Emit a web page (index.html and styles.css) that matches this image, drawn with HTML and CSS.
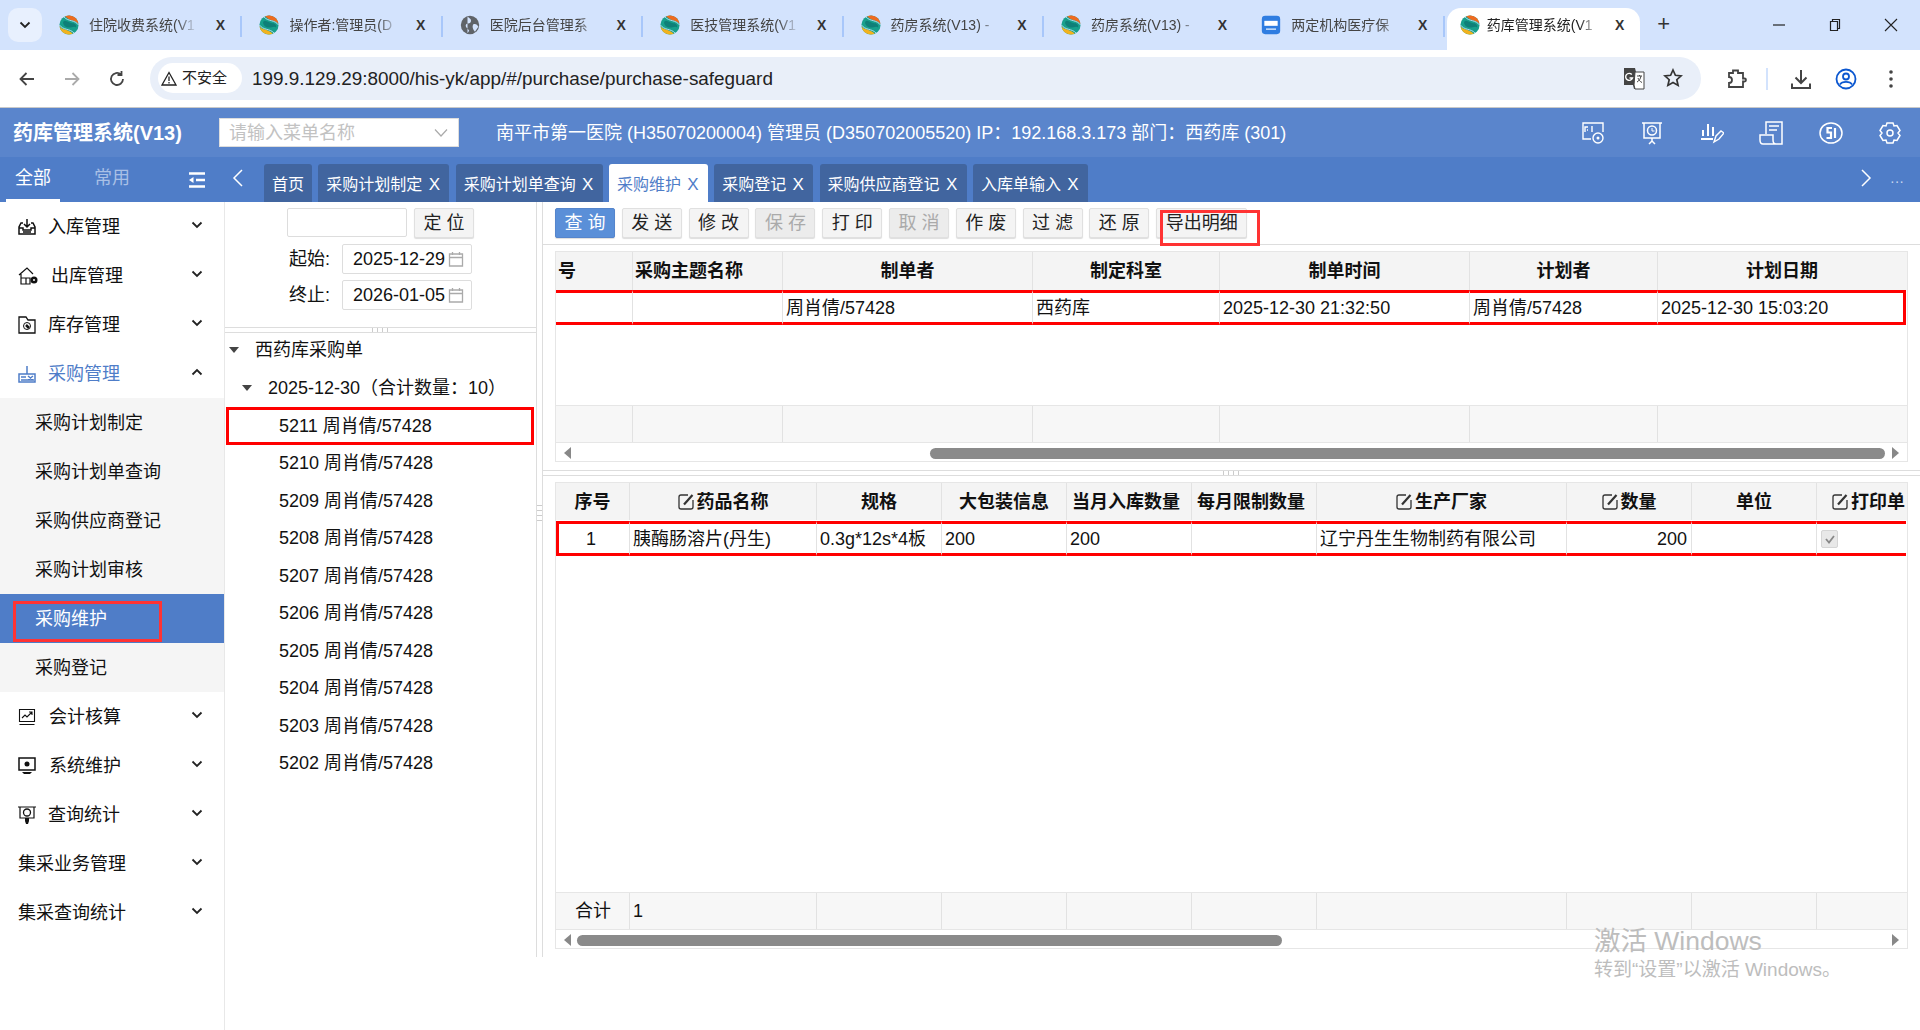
FILE: index.html
```html
<!DOCTYPE html>
<html lang="zh-CN">
<head>
<meta charset="utf-8">
<title>药库管理系统(V13)</title>
<link rel="stylesheet" href="styles.css">
</head>
<body>
<svg class="defs" width="0" height="0">
  <defs>
    <symbol id="logo" viewBox="0 0 24 24">
      <circle cx="12" cy="12" r="11.5" fill="#17a08c"/>
      <path d="M5 8c3-3 7 2 11 2s5 3 4.500 5C18 12 13 17 8 14c-2-1.500-3.500-3.500-3-6Z" fill="#0f7f78"/>
      <path d="M7.500 1.400A11.500 11.500 0 0 1 23.400 10.500C19.500 5 12.500 7.500 7.500 1.400Z" fill="#ee6a1f"/>
      <path d="M16.500 22.600A11.500 11.500 0 0 1 .6 13.500C4.500 19 11.500 16.500 16.500 22.600Z" fill="#f2b21d"/>
      <path d="M6 2.400C11 8 19 5.500 23.400 12M18 21.600C13 16 5 18.500.6 12" fill="none" stroke="#d3e3fd" stroke-width="1"/>
    </symbol>
    <symbol id="edit" viewBox="0 0 16 16">
      <path d="M10 1H3A2 2 0 0 0 1 3v10a2 2 0 0 0 2 2h10a2 2 0 0 0 2-2V6" fill="none" stroke="#333" stroke-width="1.300"/>
      <path d="M6 10.500 14.500 1" stroke="#333" stroke-width="2.200" fill="none"/>
    </symbol>
    <symbol id="chev" viewBox="0 0 12 8">
      <path d="M1.500 1.500 6 6l4.500-4.500" fill="none" stroke="#222" stroke-width="1.800"/>
    </symbol>
    <symbol id="cal" viewBox="0 0 16 16">
      <path d="M1.500 3h13v12h-13zM1.500 6.500h13M4.500 1v3M11.500 1v3" fill="none" stroke="#aaa" stroke-width="1.300"/>
    </symbol>
  </defs>
</svg>

<div class="tabstrip">
  <div class="tabs-menu"><svg width="12" height="8"><use href="#chev"/></svg></div>
  <div class="ctab"><svg class="fav"><use href="#logo"/></svg><span class="ctitle">住院收费系统(V1</span><span class="cx">X</span></div>
  <div class="ctab"><svg class="fav"><use href="#logo"/></svg><span class="ctitle">操作者:管理员(D</span><span class="cx">X</span></div>
  <div class="ctab"><svg class="fav" viewBox="0 0 24 24"><circle cx="12" cy="12" r="11" fill="#5f6368"/><path d="M9 2c3 2 5 3 4 6s-5 1-6 4 3 4 4 7l-2 3M16 11c3-1 5 1 6 3l-4 6c-2-2-4-6-2-9Z" fill="#d3e3fd"/></svg><span class="ctitle">医院后台管理系</span><span class="cx">X</span></div>
  <div class="ctab"><svg class="fav"><use href="#logo"/></svg><span class="ctitle">医技管理系统(V1</span><span class="cx">X</span></div>
  <div class="ctab"><svg class="fav"><use href="#logo"/></svg><span class="ctitle">药房系统(V13) -</span><span class="cx">X</span></div>
  <div class="ctab"><svg class="fav"><use href="#logo"/></svg><span class="ctitle">药房系统(V13) -</span><span class="cx">X</span></div>
  <div class="ctab"><svg class="fav" viewBox="0 0 24 24"><rect x="1" y="1" width="22" height="22" rx="4" fill="#2f7de1"/><rect x="4" y="7" width="16" height="6" fill="#fff"/><rect x="6" y="16" width="12" height="2" fill="#bcd6f7"/></svg><span class="ctitle">两定机构医疗保</span><span class="cx">X</span></div>
  <div class="ctab ctab-active"><svg class="fav"><use href="#logo"/></svg><span class="ctitle">药库管理系统(V1</span><span class="cx">X</span></div>
  <div class="newtab">+</div>
  <div class="winctl">
    <svg width="14" height="14" viewBox="0 0 14 14"><path d="M1 7h12" stroke="#222" stroke-width="1.200"/></svg>
    <svg width="14" height="14" viewBox="0 0 14 14"><path d="M2.500 3.500h7v9h-7zM4.500 3.500v-2h7v9h-2" fill="none" stroke="#222" stroke-width="1.200"/></svg>
    <svg width="14" height="14" viewBox="0 0 14 14"><path d="M1 1l12 12M13 1 1 13" stroke="#222" stroke-width="1.100"/></svg>
  </div>
</div>

<div class="toolbar">
  <div class="navbtns">
    <svg width="18" height="18" viewBox="0 0 18 18"><path d="M16 9H3M8.500 3 2.500 9l6 6" fill="none" stroke="#444" stroke-width="1.800"/></svg>
    <svg width="18" height="18" viewBox="0 0 18 18"><path d="M2 9h13M9.500 3l6 6-6 6" fill="none" stroke="#aaa" stroke-width="1.800"/></svg>
    <svg width="18" height="18" viewBox="0 0 18 18"><path d="M15 9a6 6 0 1 1-2-4.500M13.500 1v4h-4" fill="none" stroke="#444" stroke-width="1.800"/></svg>
  </div>
  <div class="omnibox">
    <div class="chip">
      <svg width="16" height="15" viewBox="0 0 16 15"><path d="M8 1.500 15 14H1ZM8 5.500v4.500M8 11v1.500" fill="none" stroke="#222" stroke-width="1.300"/></svg>
      <span>不安全</span>
    </div>
    <span class="url">199.9.129.29:8000/his-yk/app/#/purchase/purchase-safeguard</span>
    <div class="omni-icons">
      <svg width="24" height="24" viewBox="0 0 24 24"><path d="M2 2h11l1 4h8v17H12l-1-4H2Z" fill="#444"/><path d="M13 6h9v17h-9l-1-4Z" fill="#fff" stroke="#444"/><path d="M15 10h5M17.500 9v1M19 10c-.5 3-2 5-4 6M16 12c.7 2 2 3.500 4 4.500" fill="none" stroke="#444"/><path d="M9.800 8.500A3.500 3.500 0 1 0 10.500 12H7.500" fill="none" stroke="#fff" stroke-width="1.400"/></svg>
      <svg width="20" height="20" viewBox="0 0 20 20"><path d="m10 2 2.400 5.300 5.700.6-4.300 3.800 1.300 5.700L10 14.500l-5.100 2.900 1.300-5.700L1.900 7.900l5.700-.6Z" fill="none" stroke="#333" stroke-width="1.700"/></svg>
    </div>
  </div>
  <div class="tool-icons">
    <svg width="22" height="22" viewBox="0 0 22 22"><path d="M4 5h4V2.500h5V5h5v5.500h1.500a1.500 1.500 0 0 1 0 3H18V19H4v-4a2.500 2.500 0 0 0 0-6Z" fill="none" stroke="#444" stroke-width="1.800"/></svg>
    <span class="tool-sep"></span>
    <svg width="22" height="22" viewBox="0 0 22 22"><path d="M11 2v13M5.500 9.500 11 15l5.500-5.500M2 15.500V20h18v-4.500" fill="none" stroke="#444" stroke-width="2"/></svg>
    <svg width="22" height="22" viewBox="0 0 22 22"><circle cx="11" cy="11" r="9.500" fill="none" stroke="#0b57d0" stroke-width="1.800"/><circle cx="11" cy="8.500" r="3" fill="none" stroke="#0b57d0" stroke-width="1.800"/><path d="M5 16.500c2-3.500 10-3.500 12 0" fill="none" stroke="#0b57d0" stroke-width="1.800"/></svg>
    <svg width="22" height="22" viewBox="0 0 22 22"><circle cx="11" cy="4" r="1.800" fill="#444"/><circle cx="11" cy="11" r="1.800" fill="#444"/><circle cx="11" cy="18" r="1.800" fill="#444"/></svg>
  </div>
</div>

<header class="app-head">
  <div class="app-title">药库管理系统(V13)</div>
  <div class="menu-search"><span>请输入菜单名称</span><svg width="16" height="10" viewBox="0 0 16 10"><path d="M2 1.500 8 8l6-6.500" fill="none" stroke="#aaa" stroke-width="1.200"/></svg></div>
  <div class="app-info">南平市第一医院 (H35070200004) 管理员 (D350702005520) IP：192.168.3.173 部门：西药库 (301)</div>
  <div class="head-icons">
    <svg viewBox="0 0 24 24"><path d="M10 18H2V2h20v9M4 11V6h3M6 9h1M11 5v6" fill="none" stroke="#fff" stroke-width="1.400"/><circle cx="17" cy="17" r="5" fill="none" stroke="#fff" stroke-width="1.400"/><circle cx="17" cy="17" r="1.500" fill="#fff"/></svg>
    <svg viewBox="0 0 24 24"><path d="M2 2h20M4 2v15h16V2M12 17v3M9 23l3-3 3 3" fill="none" stroke="#fff" stroke-width="1.500"/><circle cx="12" cy="9.500" r="4.500" fill="none" stroke="#fff" stroke-width="1.500"/><path d="M12 7v3h2.500" fill="none" stroke="#fff"/></svg>
    <svg viewBox="0 0 24 24"><path d="M3 9v6M8 3v12M13 6v9M1 18h12" fill="none" stroke="#fff" stroke-width="2"/><path d="m14 21 2-6 5-5 3 2-5 6Z" fill="none" stroke="#fff" stroke-width="1.400"/></svg>
    <svg viewBox="0 0 24 24"><path d="M7 13V1h16v22H11M10 5h10M10 9h8M1 14h13v5c0 2 1 4 3 4H4c-2 0-3-2-3-4Z" fill="none" stroke="#fff" stroke-width="1.500"/></svg>
    <svg viewBox="0 0 24 24"><ellipse cx="12" cy="12" rx="11" ry="10" fill="none" stroke="#fff" stroke-width="1.500"/><path d="M13 7H8.500v4.500h3.500V17H7.500M16 7v10" fill="none" stroke="#fff" stroke-width="2.200"/></svg>
    <svg viewBox="0 0 24 24"><path d="m9 2h6l1 3 3-.5 3 5-2 2.500 2 2.500-3 5-3-.5-1 3H9l-1-3-3 .5-3-5 2-2.500-2-2.500 3-5 3 .5Z" fill="none" stroke="#fff" stroke-width="1.500"/><circle cx="12" cy="12" r="3" fill="none" stroke="#fff" stroke-width="1.500"/></svg>
  </div>
</header>

<nav class="nav-row">
  <div class="nav-left">
    <span class="scope scope-on">全部</span>
    <span class="scope scope-off">常用</span>
    <svg class="menu-fold" width="16" height="16" viewBox="0 0 16 16"><path d="M0 1.500h16M7 8h9M0 14.500h16" stroke="#fff" stroke-width="2.400"/><path d="M4.500 5v6L0 8Z" fill="#fff"/></svg>
  </div>
  <div class="nav-prev"><svg width="11" height="18" viewBox="0 0 11 18"><path d="M10 1 2 9l8 8" fill="none" stroke="#fff" stroke-width="1.500"/></svg></div>
  <div class="page-tabs">
    <div class="ptab">首页</div>
    <div class="ptab">采购计划制定<span class="px">X</span></div>
    <div class="ptab">采购计划单查询<span class="px">X</span></div>
    <div class="ptab ptab-on">采购维护<span class="px">X</span></div>
    <div class="ptab">采购登记<span class="px">X</span></div>
    <div class="ptab">采购供应商登记<span class="px">X</span></div>
    <div class="ptab">入库单输入<span class="px">X</span></div>
  </div>
  <div class="nav-next"><svg width="11" height="18" viewBox="0 0 11 18"><path d="m1 1 8 8-8 8" fill="none" stroke="#fff" stroke-width="1.500"/></svg><span>···</span></div>
</nav>

<div class="body">
  <aside class="sidebar">
    <div class="mi"><svg class="mi-ic" viewBox="0 0 18 18"><path d="M5 5H3L1 9v7h16V9l-2-4h-2M9 1v8M6 6l3 3 3-3M1 10h4v2h8v-2h4M5 14h8" fill="none" stroke="#111" stroke-width="1.500"/></svg><span>入库管理</span><svg class="mi-ch"><use href="#chev"/></svg></div>
    <div class="mi"><svg class="mi-ic mi-ic-w" viewBox="0 0 20 18"><path d="M1 8 9 1l6 6M3 7v10h9V11H3M8 11v6" fill="none" stroke="#111" stroke-width="1.200"/><circle cx="16" cy="13" r="3.500" fill="#111"/><circle cx="16" cy="13" r="1" fill="#fff"/></svg><span>出库管理</span><svg class="mi-ch"><use href="#chev"/></svg></div>
    <div class="mi"><svg class="mi-ic" viewBox="0 0 18 18"><path d="M1 1h7l2 3h7v13H1Z" fill="none" stroke="#111" stroke-width="1.300"/><circle cx="9" cy="10" r="3.500" fill="none" stroke="#111"/><path d="m8 9 3 3" stroke="#111" stroke-width="2.500"/></svg><span>库存管理</span><svg class="mi-ch"><use href="#chev"/></svg></div>
    <div class="mi mi-open"><svg class="mi-ic" viewBox="0 0 18 18"><path d="M9 1v8M1 9h16v8H1ZM3 12h5M3 15h13M10 11l5 4M15 11l-5 4" fill="none" stroke="#4f7dc8" stroke-width="1.500"/></svg><span>采购管理</span><svg class="mi-ch mi-ch-up"><use href="#chev"/></svg></div>
    <div class="submenu">
      <div class="si">采购计划制定</div>
      <div class="si">采购计划单查询</div>
      <div class="si">采购供应商登记</div>
      <div class="si">采购计划审核</div>
      <div class="si si-on">采购维护</div>
      <div class="si">采购登记</div>
    </div>
    <div class="mi"><svg class="mi-ic" viewBox="0 0 18 18"><path d="M1.500 1.500h15v12h-15ZM1.500 16.500h15M4 10l3-3 2 2 5-5M11 4h3v3" fill="none" stroke="#111" stroke-width="1.100"/></svg><span class="mi-t1">会计核算</span><svg class="mi-ch"><use href="#chev"/></svg></div>
    <div class="mi"><svg class="mi-ic" viewBox="0 0 18 18"><path d="M1 1h16v12H1Z" fill="none" stroke="#111" stroke-width="1.500"/><path d="M4 15h10l-2 2H6Z" fill="#111"/><circle cx="9" cy="7" r="2.500" fill="#111"/></svg><span class="mi-t1">系统维护</span><svg class="mi-ch"><use href="#chev"/></svg></div>
    <div class="mi"><svg class="mi-ic" viewBox="0 0 18 18"><path d="M0 1h18M2 1v11h14V1" fill="none" stroke="#111" stroke-width="1.200"/><circle cx="9" cy="6.500" r="3.500" fill="none" stroke="#111" stroke-width="1.300"/><path d="M7 12h4v3l-1 3H8l-1-3Z" fill="#111"/></svg><span>查询统计</span><svg class="mi-ch"><use href="#chev"/></svg></div>
    <div class="mi"><span>集采业务管理</span><svg class="mi-ch"><use href="#chev"/></svg></div>
    <div class="mi"><span>集采查询统计</span><svg class="mi-ch"><use href="#chev"/></svg></div>
  </aside>

  <div class="workspace">
    <section class="tree-pane">
      <div class="filter">
        <div class="f-row f-locate"><span class="inp"></span><span class="btn btn-loc">定 位</span></div>
        <div class="f-row"><label>起始:</label><span class="date">2025-12-29<svg><use href="#cal"/></svg></span></div>
        <div class="f-row"><label>终止:</label><span class="date">2026-01-05<svg><use href="#cal"/></svg></span></div>
      </div>
      <div class="split-h"><span class="grip"></span></div>
      <div class="tree">
        <div class="tr tr-0"><i class="caret"></i>西药库采购单</div>
        <div class="tr tr-1"><i class="caret"></i>2025-12-30（合计数量：10）</div>
        <div class="tr tr-2 tr-mark">5211 周肖倩/57428</div>
        <div class="tr tr-2">5210 周肖倩/57428</div>
        <div class="tr tr-2">5209 周肖倩/57428</div>
        <div class="tr tr-2">5208 周肖倩/57428</div>
        <div class="tr tr-2">5207 周肖倩/57428</div>
        <div class="tr tr-2">5206 周肖倩/57428</div>
        <div class="tr tr-2">5205 周肖倩/57428</div>
        <div class="tr tr-2">5204 周肖倩/57428</div>
        <div class="tr tr-2">5203 周肖倩/57428</div>
        <div class="tr tr-2">5202 周肖倩/57428</div>
      </div>
    </section>

    <div class="split-v"><span class="grip-v"></span></div>

    <section class="main-pane">
      <div class="actions">
        <span class="btn btn-pri">查 询</span>
        <span class="btn">发 送</span>
        <span class="btn">修 改</span>
        <span class="btn btn-dis">保 存</span>
        <span class="btn">打 印</span>
        <span class="btn btn-dis">取 消</span>
        <span class="btn">作 废</span>
        <span class="btn">过 滤</span>
        <span class="btn">还 原</span>
        <span class="btn btn-exp">导出明细</span>
        <span class="mark-exp"></span>
      </div>

      <div class="grid grid-top">
        <div class="g-row g-head cols-top">
          <div class="c c-l">号</div><div class="c c-l">采购主题名称</div><div class="c">制单者</div><div class="c">制定科室</div><div class="c">制单时间</div><div class="c">计划者</div><div class="c">计划日期</div>
        </div>
        <div class="g-row g-data g-data-top cols-top">
          <div class="c"></div><div class="c"></div><div class="c c-t">周肖倩/57428</div><div class="c c-t">西药库</div><div class="c c-t">2025-12-30 21:32:50</div><div class="c c-t">周肖倩/57428</div><div class="c c-t">2025-12-30 15:03:20</div>
        </div>
        <div class="g-space"></div>
        <div class="g-row g-foot cols-top">
          <div class="c"></div><div class="c"></div><div class="c"></div><div class="c"></div><div class="c"></div><div class="c"></div><div class="c"></div>
        </div>
        <div class="hscroll">
          <i class="arr arr-l"></i><span class="thumb thumb-top"></span><i class="arr arr-r"></i>
        </div>
      </div>

      <div class="split-h split-main"><span class="grip"></span></div>

      <div class="grid grid-bot">
        <div class="g-row g-head g-head-bot cols-bot">
          <div class="c">序号</div>
          <div class="c"><svg class="ed"><use href="#edit"/></svg>药品名称</div>
          <div class="c">规格</div><div class="c">大包装信息</div><div class="c c-off">当月入库数量</div><div class="c c-off">每月限制数量</div>
          <div class="c"><svg class="ed"><use href="#edit"/></svg>生产厂家</div>
          <div class="c"><svg class="ed"><use href="#edit"/></svg>数量</div>
          <div class="c">单位</div>
          <div class="c c-clip"><svg class="ed"><use href="#edit"/></svg>打印单</div>
        </div>
        <div class="g-row g-data g-data-bot cols-bot">
          <div class="c c-off">1</div><div class="c c-t">胰酶肠溶片(丹生)</div><div class="c c-t">0.3g*12s*4板</div><div class="c c-t">200</div><div class="c c-t">200</div><div class="c"></div><div class="c c-t">辽宁丹生生物制药有限公司</div><div class="c c-r">200</div><div class="c"></div>
          <div class="c c-t"><span class="chk"><svg width="12" height="12" viewBox="0 0 12 12"><path d="m2 6 3 3.500L10 3" fill="none" stroke="#888" stroke-width="1.800"/></svg></span></div>
        </div>
        <div class="g-space"></div>
        <div class="g-row g-foot cols-bot">
          <div class="c c-sum">合计</div><div class="c c-t">1</div><div class="c"></div><div class="c"></div><div class="c"></div><div class="c"></div><div class="c"></div><div class="c"></div><div class="c"></div><div class="c"></div>
        </div>
        <div class="hscroll">
          <i class="arr arr-l"></i><span class="thumb thumb-bot"></span><i class="arr arr-r"></i>
        </div>
      </div>
    </section>
  </div>

  <div class="watermark">
    <div class="wm-1">激活 Windows</div>
    <div class="wm-2">转到“设置”以激活 Windows。</div>
  </div>
</div>
</body>
</html>
```

FILE: styles.css
```css
* { box-sizing: border-box; }
html, body { margin: 0; padding: 0; }
body {
  width: 1920px; height: 1030px; overflow: hidden; background: #fff; color: #111;
  font-family: "Liberation Sans", "Noto Sans CJK SC", sans-serif; font-size: 18px; line-height: 24px;
}
.defs { position: absolute; }

/* browser tab strip */
.tabstrip { height: 50px; background: #d3e3fd; display: flex; align-items: flex-end; padding-left: 8px; }
.tabs-menu { width: 34px; height: 34px; margin-bottom: 8px; border-radius: 10px; background: #e8f0fe; display: flex; align-items: center; justify-content: center; }
.ctab { width: 200.4px; height: 42px; padding: 0 14px 8px 12px; display: flex; align-items: center; gap: 10px; font-size: 14px; color: #444; position: relative; flex: none; }
.ctab:first-of-type { margin-left: 4px; }
.ctab::after { content: ""; position: absolute; right: 0; top: 8px; height: 21px; width: 2px; background: #a8c7fa; }
.ctab:nth-of-type(7)::after, .ctab-active::after { display: none; }
.ctab-active { width: 193px; margin-left: 2px; background: #fff; border-radius: 14px 14px 0 0; color: #222; padding: 0 12px 8px 10px; gap: 7px; }
.fav { width: 20px; height: 20px; flex: none; margin-left: 5px; }
.ctab-active .fav { margin-left: 3px; }
.ctitle { flex: 1; min-width: 0; overflow: hidden; white-space: nowrap; -webkit-mask-image: linear-gradient(90deg, #000 78%, transparent 96%); mask-image: linear-gradient(90deg, #000 78%, transparent 96%); }
.cx { width: 16px; text-align: center; font-size: 14px; font-weight: 700; color: #333; }
.newtab { width: 48px; padding-bottom: 10px; font-size: 22px; color: #333; height: 42px; display: flex; align-items: center; justify-content: center; }
.winctl { margin-left: auto; display: flex; gap: 42px; padding: 0 22px 18px 0; }

/* browser toolbar */
.toolbar { height: 58px; background: #fff; display: flex; align-items: center; padding-left: 18px; border-bottom: 1px solid #c9c9c9; }
.navbtns { width: 132px; display: flex; gap: 27px; }
.omnibox { width: 1551px; height: 43px; margin-top: -1px; background: #e9eff9; border-radius: 22px; display: flex; align-items: center; padding-left: 8px; }
.chip { width: 84px; height: 30px; background: #fff; border-radius: 15px; display: flex; align-items: center; gap: 5px; padding-left: 3px; font-size: 15px; color: #222; white-space: nowrap; }
.url { margin-left: 10px; font-size: 18.900px; color: #222; white-space: nowrap; padding-top: 1px; }
.omni-icons { margin-left: auto; display: flex; align-items: center; gap: 17px; padding-right: 18px; }
.tool-icons { display: flex; align-items: center; gap: 23px; margin-left: 24px; }
.tool-sep { width: 2px; height: 22px; background: #d3e3fd; margin: 0 -1px 0 -4px; }

/* application header */
.app-head { height: 49px; background: #5a85cc; display: flex; align-items: center; padding-left: 13px; color: #fff; }
.app-title { width: 206px; font-size: 20px; font-weight: 700; white-space: nowrap; }
.menu-search { width: 240px; height: 29px; background: #fff; border: 1px solid #ddd; display: flex; align-items: center; justify-content: space-between; padding: 0 9px; color: #c2c2c2; }
.app-info { margin-left: 37px; white-space: nowrap; font-size: 18px; }
.head-icons { margin-left: auto; display: flex; gap: 35.400px; padding-right: 18px; }
.head-icons svg { width: 24px; height: 24px; }

/* page tab row */
.nav-row { height: 45px; background: #4f7dc8; display: flex; color: #fff; }
.nav-left { width: 224px; flex: none; display: flex; align-items: flex-start; }
.scope { width: 54px; height: 45px; padding-top: 9px; text-align: center; flex: none; }
.scope-on { margin-left: 6px; border-bottom: 3px solid #fff; }
.scope-off { margin-left: 25px; color: #a9c0e6; }
.menu-fold { margin: 15px 19px 0 auto; }
.nav-prev { width: 40px; padding: 12px 0 0 8px; flex: none; }
.page-tabs { display: flex; gap: 6.300px; align-items: flex-end; }
.ptab { height: 38px; padding: 9px 8px 0; font-size: 16px; background: #41659f; border-radius: 3px 3px 0 0; white-space: nowrap; display: flex; align-items: flex-start; }
.ptab-on { background: #fff; color: #4f7dc8; }
.px { width: 14px; margin-left: 5px; font-size: 17px; text-align: center; }
.nav-next { margin-left: auto; display: flex; gap: 18px; padding: 12px 16px 0 0; align-items: flex-start; font-size: 14px; color: #c8d7ef; }

/* body layout */
.body { height: 828px; display: flex; align-items: flex-start; position: relative; }
.sidebar { width: 225px; height: 828px; flex: none; border-right: 1px solid #e8e8e8; }
.mi { height: 49px; display: flex; align-items: center; padding: 0 21px 0 18px; font-size: 18px; color: #111; }
.mi-ic { width: 18px; height: 18px; margin-right: 12px; flex: none; }
.mi-ic-w { width: 20px; margin-right: 13px; }
.mi-t1 { margin-left: 1px; }
.mi-ch { width: 12px; height: 8px; margin-left: auto; margin-top: -4px; }
.mi-ch-up { transform: rotate(180deg); }
.mi-open { color: #4f7dc8; }
.submenu { background: #f5f5f5; }
.si { height: 49px; display: flex; align-items: center; padding-left: 35px; position: relative; }
.si-on { background: #4f7dc8; color: #fff; }
.si-on::after { content: ""; position: absolute; left: 13px; top: 7px; width: 143px; height: 35px; border: 3px solid #f33; }

.workspace { flex: 1; height: 755px; display: flex; }

/* tree column */
.tree-pane { width: 312px; flex: none; border-right: 1px solid #ddd; }
.filter { height: 125px; padding-top: 6px; display: flex; flex-direction: column; gap: 7px; }
.f-row { height: 29px; display: flex; align-items: center; }
.f-locate { padding-left: 62px; gap: 7px; }
.f-row label { width: 105px; text-align: right; margin-right: 12px; }
.inp { width: 120px; height: 29px; border: 1px solid #ddd; border-radius: 2px; }
.date { width: 130px; height: 30px; border: 1px solid #ddd; border-radius: 2px; display: flex; align-items: center; padding-left: 10px; justify-content: space-between; padding-right: 7px; }
.date svg { width: 16px; height: 16px; }
.split-h { height: 6px; border-top: 1px solid #ddd; border-bottom: 1px solid #ddd; display: flex; justify-content: center; }
.grip { width: 18px; height: 100%; background: repeating-linear-gradient(90deg, #ccc 0 1px, transparent 1px 5px); }
.tree { margin-top: -1px; }
.tr { height: 37.500px; display: flex; align-items: center; white-space: nowrap; }
.tr-0 { padding: 0 0 2px 4px; }
.tr-1 { padding-left: 17px; }
.tr-2 { padding-left: 53px; margin: 0 2px 0 1px; }
.caret { width: 0; height: 0; border: 5px solid transparent; border-top: 6px solid #444; border-bottom: 0; margin-right: 16px; }
.tr-mark { outline: 3px solid #f00; outline-offset: -3px; }

.split-v { width: 6px; flex: none; border-right: 1px solid #ddd; display: flex; align-items: center; }
.grip-v { width: 100%; height: 16px; margin-top: -134px; background: repeating-linear-gradient(0deg, #ccc 0 1px, transparent 1px 5px); }

/* main column */
.main-pane { flex: 1; min-width: 0; }
.actions { height: 43px; padding: 6px 0 0 12px; display: flex; gap: 6.800px; border-bottom: 1px solid #ddd; position: relative; }
.btn { width: 60px; height: 30px; display: flex; align-items: center; justify-content: center; background: #f4f4f4; border: 1px solid #e0e0e0; border-radius: 2px; box-shadow: 0 1px 1px #ddd; white-space: pre; font-size: 18px; color: #222; }
.btn-pri { background: #5a8fd8; border-color: #5585cc; color: #fff; }
.btn-dis { background: #ececec; color: #aaa; }
.btn-exp { width: 91px; }
.mark-exp { position: absolute; left: 617px; top: 8px; width: 100px; height: 36px; border: 3px solid #f33; }

/* data grids */
.grid { margin: 6px 12px 0 12px; border: 1px solid #e6e6e6; display: flex; flex-direction: column; }
.grid-top { height: 211px; }
.grid-bot { height: 467px; }
.g-row { display: grid; flex: none; }
.cols-top { grid-template-columns: 77px 150px 250px 187px 250px 188px 248px; }
.cols-bot { grid-template-columns: 74px 187px 125px 125px 125px 125px 250px 125px 125px 89px; }
.c { display: flex; align-items: center; justify-content: center; border-right: 1px solid #e2e2e2; overflow: hidden; white-space: nowrap; }
.c:last-child { border-right: 0; }
.g-head { height: 38px; background: #f4f4f4; font-weight: 700; font-size: 18px; }
.g-head-bot { height: 37px; }
.c-l { justify-content: flex-start; padding-left: 2px; }
.c-t { justify-content: flex-start; padding-left: 3px; }
.c-r { justify-content: flex-end; padding-right: 4px; }
.c-off { padding-right: 6px; }
.c-clip { justify-content: flex-start; padding-left: 15px; }
.ed { width: 16px; height: 16px; margin-right: 3px; flex: none; }
.g-data { height: 35px; }
.g-data .c { border-top: 3px solid #f00; border-bottom: 3px solid #f00; }
.g-data-top .c:last-child { border-right: 3px solid #f00; }
.g-data-bot { margin-top: 1px; }
.g-data-bot .c:first-child { border-left: 3px solid #f00; }
.g-space { flex: 1; }
.g-foot { height: 38px; background: #f7f7f7; border-top: 1px solid #e6e6e6; border-bottom: 1px solid #e6e6e6; }
.c-sum { justify-content: flex-end; padding-right: 18px; }
.chk { width: 17px; height: 18px; background: #e8e8e8; border: 1px solid #d5d5d5; border-radius: 2px; display: flex; align-items: center; justify-content: center; margin-left: 1px; }
.hscroll { flex: none; height: 18px; padding: 2px 8px 0; display: flex; align-items: center; }
.arr { width: 0; height: 0; border: 6px solid transparent; flex: none; }
.arr-l { border-right: 7px solid #888; border-left: 0; }
.arr-r { border-left: 7px solid #888; border-right: 0; margin-left: auto; }
.thumb { height: 11px; border-radius: 6px; background: #8a8a8a; flex: none; }
.thumb-top { margin-left: 359px; width: 955px; }
.thumb-bot { margin-left: 6px; width: 705px; }
.split-main { margin-top: 8px; }

.watermark { position: absolute; left: 1594px; top: 723px; color: #bdbdbd; white-space: nowrap; pointer-events: none; }
.wm-1 { font-size: 26.500px; line-height: 32px; }
.wm-2 { font-size: 19px; line-height: 26px; }
```
